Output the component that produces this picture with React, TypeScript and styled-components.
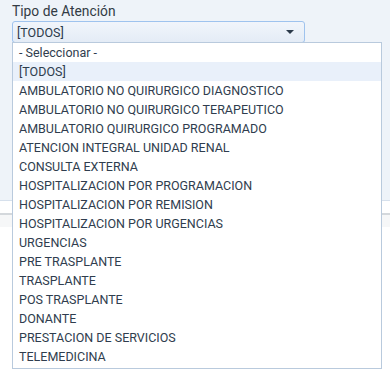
import styled, { createGlobalStyle } from 'styled-components';

const options = [
  '- Seleccionar -',
  '[TODOS]',
  'AMBULATORIO NO QUIRURGICO DIAGNOSTICO',
  'AMBULATORIO NO QUIRURGICO TERAPEUTICO',
  'AMBULATORIO QUIRURGICO PROGRAMADO',
  'ATENCION INTEGRAL UNIDAD RENAL',
  'CONSULTA EXTERNA',
  'HOSPITALIZACION POR PROGRAMACION',
  'HOSPITALIZACION POR REMISION',
  'HOSPITALIZACION POR URGENCIAS',
  'URGENCIAS',
  'PRE TRASPLANTE',
  'TRASPLANTE',
  'POS TRASPLANTE',
  'DONANTE',
  'PRESTACION DE SERVICIOS',
  'TELEMEDICINA'
];

const GlobalStyle = createGlobalStyle`
  html, body {
    margin: 0;
    padding: 0;
    background: #ffffff;
    font-family: Roboto, 'Liberation Sans', sans-serif;
  }
`;

const App = () => {
  return (
    <Page>
      <GlobalStyle />
      <FilterPanel>
        <Field>
          <Label>Tipo de Atención</Label>
          <SelectBox>
            <span>[TODOS]</span>
            <Caret />
          </SelectBox>
          <OptionList>
            {options.map((o) => (
              <Option key={o} $active={o === '[TODOS]'}>
                {o}
              </Option>
            ))}
          </OptionList>
        </Field>
      </FilterPanel>
      <WhiteStrip />
      <TableHeader />
      <TableBody />
    </Page>
  );
};

export default App;

const Page = styled.div`
  width: 390px;
  height: 382px;
  overflow: hidden;
  display: flex;
  flex-direction: column;
`;

const FilterPanel = styled.div`
  height: 201px;
  background: #eef3f9;
  border-bottom: 1px solid #d6e0ec;
  padding: 3px 12px 0;
  box-sizing: border-box;
`;

const Field = styled.div`
  position: relative;
  display: flex;
  flex-direction: column;
`;

const Label = styled.label`
  font-size: 13.8px;
  color: #333b45;
  line-height: 17px;
  margin-bottom: 1px;
`;

const SelectBox = styled.div`
  width: 293px;
  height: 22px;
  box-sizing: border-box;
  border: 1px solid #9fc3ee;
  border-radius: 3px;
  background: linear-gradient(#f1f5fb, #e4ecf6);
  display: flex;
  align-items: center;
  justify-content: space-between;
  padding: 0 10px 0 4px;
  font-size: 12.5px;
  color: #2c3a4b;
`;

const Caret = styled.span`
  width: 0;
  height: 0;
  border-left: 4px solid transparent;
  border-right: 4px solid transparent;
  border-top: 4px solid #2c3a4b;
`;

const OptionList = styled.ul`
  position: absolute;
  top: 39px;
  left: 0;
  width: 370px;
  margin: 0;
  padding: 0 0 2px;
  list-style: none;
  background: #ffffff;
  border: 1px solid #b9cadd;
  box-sizing: border-box;
  z-index: 2;
`;

const Option = styled.li<{ $active?: boolean }>`
  height: 19px;
  line-height: 19px;
  padding: 0 6px;
  font-size: 12.5px;
  color: #2f3d4e;
  background: ${(p) => (p.$active ? '#e9f0fa' : 'transparent')};
  white-space: nowrap;
`;

const WhiteStrip = styled.div`
  height: 12px;
  background: #ffffff;
  border-bottom: 2px solid #d4d8dc;
`;

const TableHeader = styled.div`
  height: 12px;
  background: #f6f7f8;
`;

const TableBody = styled.div`
  flex: 1;
  background: #ffffff;
`;
